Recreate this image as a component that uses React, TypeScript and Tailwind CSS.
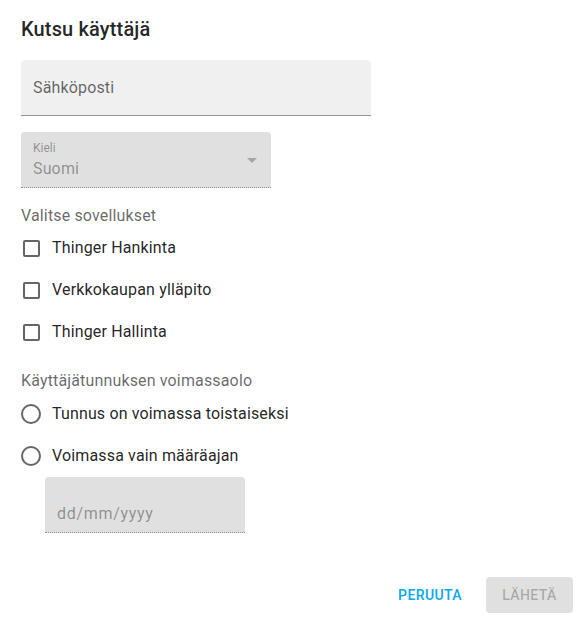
import React from 'react';

const apps = ['Thinger Hankinta', 'Verkkokaupan ylläpito', 'Thinger Hallinta'];
const validity = ['Tunnus on voimassa toistaiseksi', 'Voimassa vain määräajan'];

const CheckRow = ({ label }: { label: string }) => (
	<label className="flex h-[42px] items-center">
		<span className="flex h-[42px] w-[21px] items-center justify-center">
			<span className="block h-[17px] w-[17px] rounded-[2px] border-2 border-[#666666]" />
		</span>
		<span className="ml-[10px] text-[16px] tracking-[0.15px] text-[rgba(0,0,0,0.87)]">{label}</span>
	</label>
);

const RadioRow = ({ label }: { label: string }) => (
	<label className="flex h-[42px] items-center">
		<span className="flex h-[42px] w-[20px] items-center justify-center">
			<span className="block h-[20px] w-[20px] rounded-full border-2 border-[#666666]" />
		</span>
		<span className="ml-[11px] text-[16px] tracking-[0.15px] text-[rgba(0,0,0,0.87)]">{label}</span>
	</label>
);

const App = () => {
	return (
		<div
			className="flex h-[621px] w-[587px] flex-col bg-white pl-[21px] pt-[13px]"
			style={{ fontFamily: 'Roboto, "Liberation Sans", sans-serif' }}
		>
			<h2 className="text-[20px] font-medium leading-[32px] tracking-[0.15px] text-[rgba(0,0,0,0.87)]">
				Kutsu käyttäjä
			</h2>

			{/* sähköposti */}
			<div className="mt-[15px] flex h-[56px] w-[350px] items-center rounded-t-[4px] border-b border-[#949494] bg-[#f0f0f0] pl-[12px]">
				<span className="text-[16px] tracking-[0.15px] text-[rgba(0,0,0,0.6)]">Sähköposti</span>
			</div>

			{/* kieli */}
			<div className="relative mt-[16px] h-[56px] w-[250px] rounded-t-[4px] border-b border-dotted border-[#949494] bg-[#e0e0e0] pl-[12px]">
				<div className="pt-[8px] text-[12px] leading-[16px] text-[rgba(0,0,0,0.38)]">Kieli</div>
				<div className="mt-[1px] text-[16px] leading-[23px] tracking-[0.15px] text-[rgba(0,0,0,0.38)]">Suomi</div>
				<svg className="absolute right-[14px] top-[26px]" width="10" height="5" viewBox="0 0 10 5">
					<path d="M0 0 L10 0 L5 5 Z" fill="rgba(0,0,0,0.26)" />
				</svg>
			</div>

			<div className="mt-[17px] text-[16px] leading-[22px] tracking-[0.15px] text-[rgba(0,0,0,0.6)]">
				Valitse sovellukset
			</div>
			<div className="flex flex-col">
				{apps.map((a) => (
					<CheckRow key={a} label={a} />
				))}
			</div>

			<div className="mt-[17px] text-[16px] leading-[22px] tracking-[0.15px] text-[rgba(0,0,0,0.6)]">
				Käyttäjätunnuksen voimassaolo
			</div>
			<div className="mt-[1px] flex flex-col">
				{validity.map((v) => (
					<RadioRow key={v} label={v} />
				))}
			</div>

			{/* päivämäärä */}
			<div className="ml-[24px] h-[56px] w-[200px] rounded-t-[4px] border-b border-dotted border-[#949494] bg-[#e0e0e0] pl-[12px] pt-[25px]">
				<span className="text-[16px] leading-[23px] tracking-[0.7px] text-[rgba(0,0,0,0.38)]">dd/mm/yyyy</span>
			</div>

			<div className="mt-[44px] flex items-center justify-end pr-[14px]">
				<button className="h-[36px] px-[8px] text-[14px] font-medium uppercase tracking-[0.4px] text-[#03a9f4]">
					Peruuta
				</button>
				<button
					disabled
					className="ml-[16px] h-[36px] w-[87px] rounded-[4px] bg-[#e0e0e0] text-[14px] font-medium uppercase tracking-[0.4px] text-[rgba(0,0,0,0.26)]"
				>
					Lähetä
				</button>
			</div>
		</div>
	);
};

export default App;
